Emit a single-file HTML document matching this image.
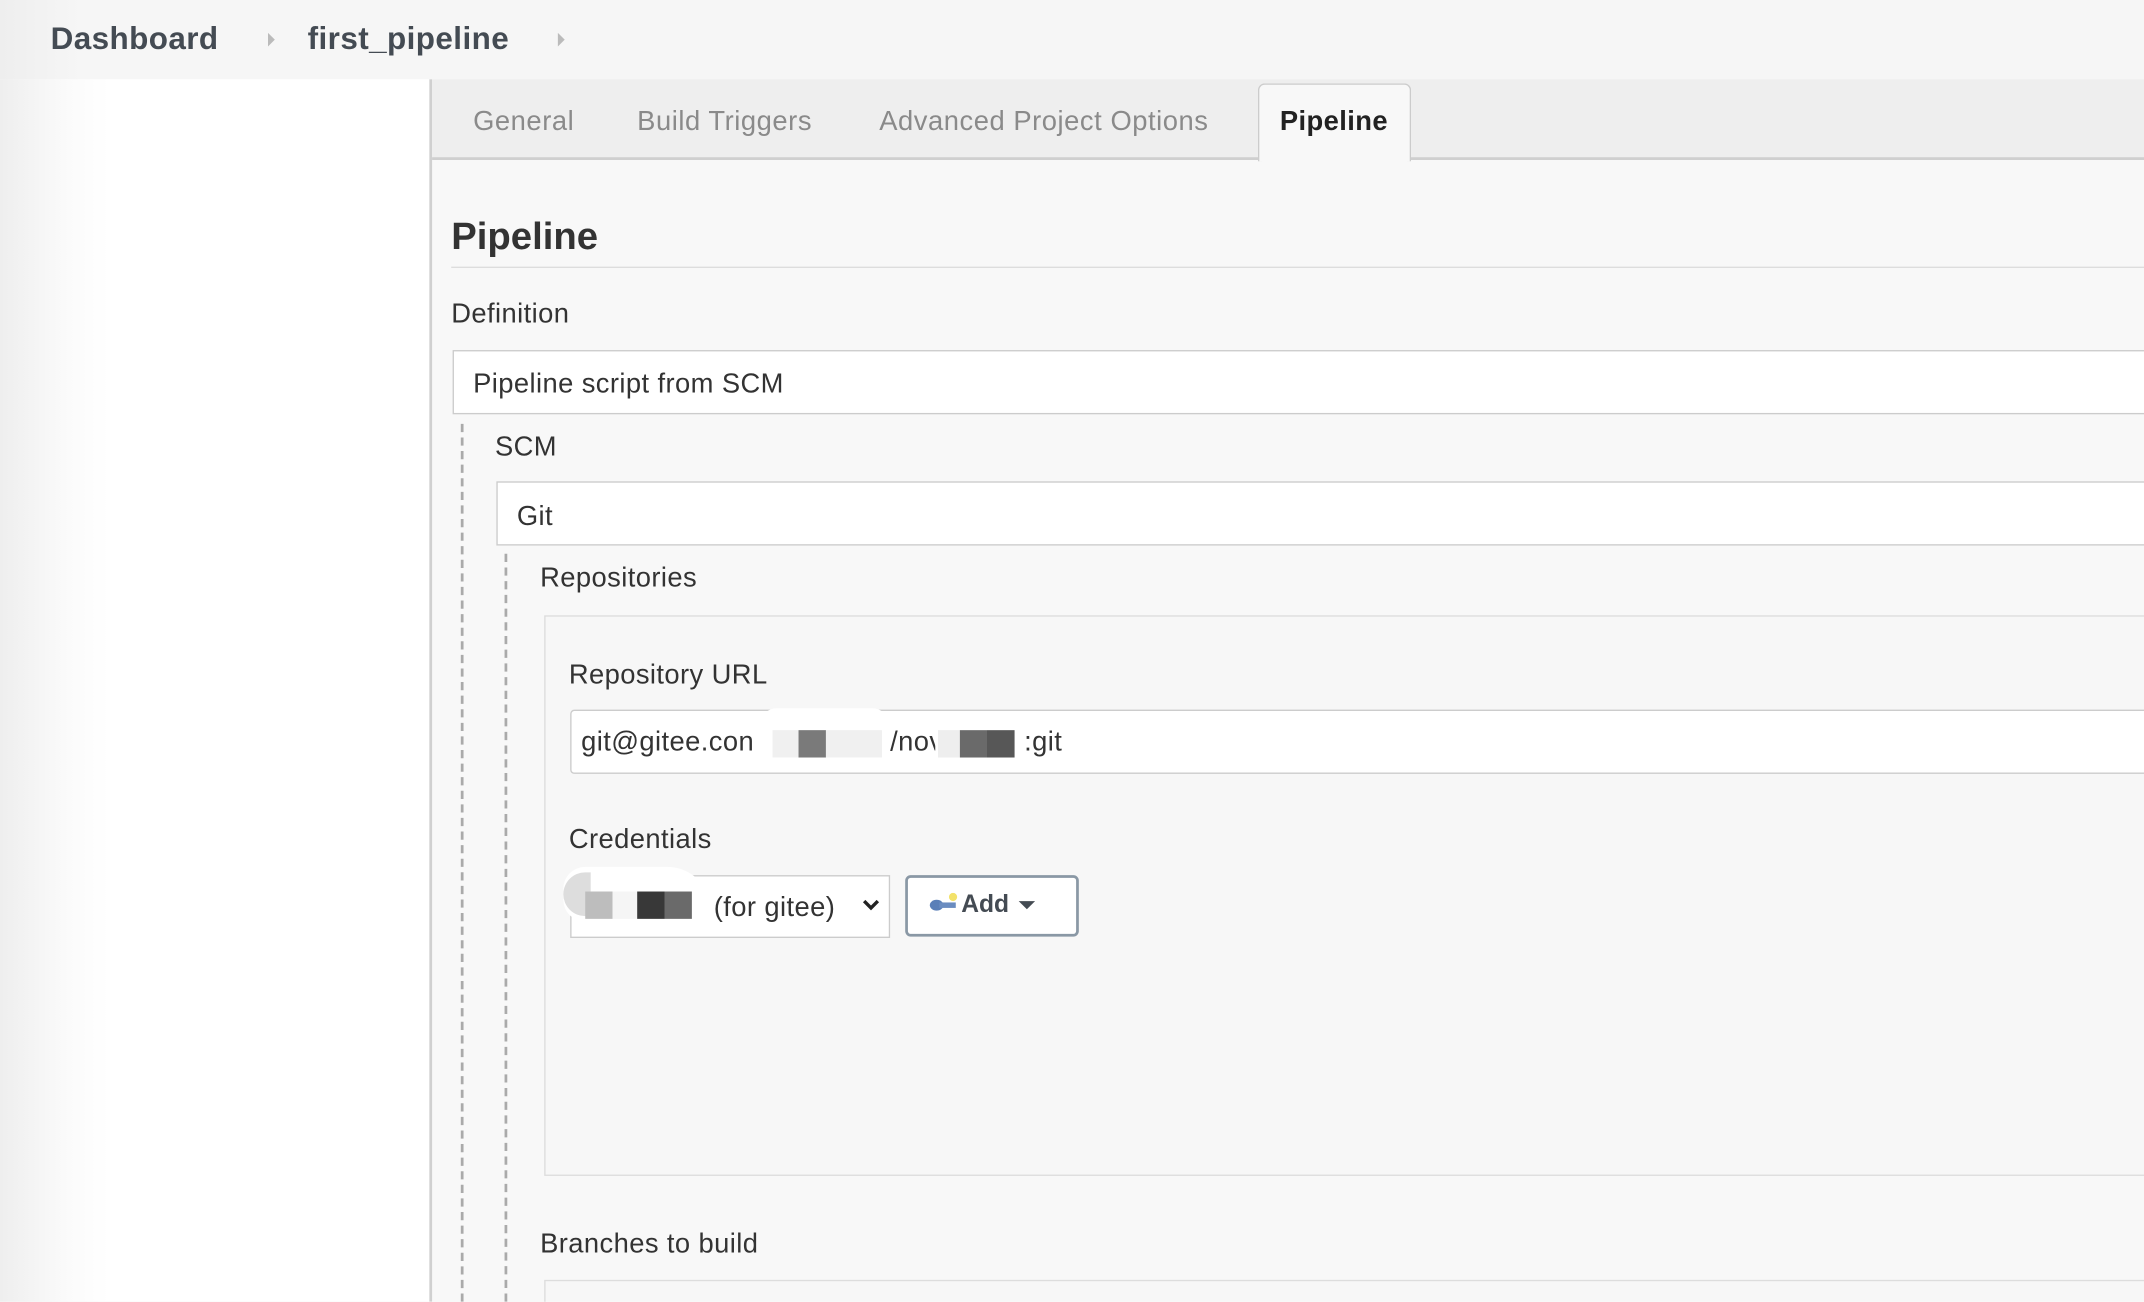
<!DOCTYPE html>
<html><head><meta charset="utf-8"><style>
html,body{margin:0;padding:0;width:2144px;height:1302px;overflow:hidden;background:#f8f8f8;font-family:"Liberation Sans",Arial,sans-serif}
#w{position:absolute;left:0;top:0;width:1568px;height:952px;overflow:hidden;transform:scale(1.36735);transform-origin:0 0;color:#333}
.a{position:absolute;white-space:nowrap}
.lbl{font-size:20px;color:#333;line-height:24px;letter-spacing:0.3px}
.box{position:absolute;background:#fff;border:1px solid #ccc;box-sizing:border-box}
</style></head><body><div id="w">
<div class="a" style="left:0;top:0;width:1568px;height:58px;background:linear-gradient(90deg,#eeeeee 0,#f6f6f6 60px,#f6f6f6 100%)"></div>
<div class="a" style="left:37px;top:15px;font-size:23px;font-weight:bold;color:#444b53;letter-spacing:0.3px">Dashboard</div>
<div class="a" style="left:196px;top:24px;width:0;height:0;border-left:5px solid #bbb;border-top:5px solid transparent;border-bottom:5px solid transparent"></div>
<div class="a" style="left:225px;top:15px;font-size:23px;font-weight:bold;color:#444b53;letter-spacing:0.3px">first_pipeline</div>
<div class="a" style="left:408px;top:24px;width:0;height:0;border-left:5px solid #bbb;border-top:5px solid transparent;border-bottom:5px solid transparent"></div>
<div class="a" style="left:0;top:58px;width:315px;height:894px;background:linear-gradient(90deg,#eeeeee 0,#fbfbfb 50px,#fff 80px)"></div>
<div class="a" style="left:314px;top:58px;width:2px;height:894px;background:#d0d0d0"></div>
<div class="a" style="left:316px;top:58px;width:1252px;height:57px;background:#eeeeee;border-bottom:2px solid #cfcfcf"></div>
<div class="a" style="left:346px;top:78px;font-size:20px;color:#8a8a8a;letter-spacing:0.4px">General</div>
<div class="a" style="left:466px;top:78px;font-size:20px;color:#8a8a8a;letter-spacing:0.4px">Build Triggers</div>
<div class="a" style="left:643px;top:78px;font-size:20px;color:#8a8a8a;letter-spacing:0.4px">Advanced Project Options</div>
<div class="a" style="left:920px;top:61px;width:112px;height:57px;background:#f8f8f8;border:1px solid #ccc;border-bottom:none;border-radius:5px 5px 0 0;box-sizing:border-box"></div>
<div class="a" style="left:936px;top:78px;font-size:20px;font-weight:bold;color:#222;letter-spacing:0.3px">Pipeline</div>
<div class="a" style="left:330px;top:157px;font-size:28px;font-weight:bold;color:#333">Pipeline</div>
<div class="a" style="left:330px;top:195px;width:1238px;height:1px;background:#ddd"></div>
<div class="a lbl" style="left:330px;top:218px">Definition</div>
<div class="box" style="left:331px;top:256px;width:1250px;height:47px"></div>
<div class="a lbl" style="left:346px;top:269px">Pipeline script from SCM</div>
<div class="a" style="left:337px;top:310px;height:642px;border-left:2px dashed #aaa"></div>
<div class="a lbl" style="left:362px;top:315px">SCM</div>
<div class="box" style="left:363px;top:352px;width:1220px;height:47px"></div>
<div class="a lbl" style="left:378px;top:366px">Git</div>
<div class="a" style="left:369px;top:405px;height:547px;border-left:2px dashed #aaa"></div>
<div class="a lbl" style="left:395px;top:411px">Repositories</div>
<div class="a" style="left:398px;top:450px;width:1180px;height:410px;border:1px solid #ddd;background:#f7f7f7;box-sizing:border-box"></div>
<div class="a lbl" style="left:416px;top:482px">Repository URL</div>
<div class="box" style="left:417px;top:519px;width:1170px;height:47px;border-radius:3px"></div>
<div class="a lbl" style="left:425px;top:531px">git@gitee.con</div>
<div class="a" style="left:556px;top:518px;width:94px;height:40px;background:#fff;border-radius:12px"></div>
<div class="a" style="left:565px;top:534px;width:80px;height:20px;background:#f0f0f0"></div>
<div class="a" style="left:584px;top:534px;width:20px;height:20px;background:#7a7a7a"></div>
<div class="a lbl" style="left:651px;top:531px">/nov</div>
<div class="a" style="left:684px;top:522px;width:64px;height:40px;background:#fff;border-radius:12px"></div>
<div class="a" style="left:686px;top:534px;width:16px;height:20px;background:#eee"></div>
<div class="a" style="left:702px;top:534px;width:40px;height:20px;background:linear-gradient(90deg,#6a6a6a 50%,#575757 50%)"></div>
<div class="a lbl" style="left:749px;top:531px">:git</div>
<div class="a lbl" style="left:416px;top:602px">Credentials</div>
<div class="box" style="left:417px;top:640px;width:234px;height:46px"></div>
<div class="a" style="left:412px;top:634px;width:108px;height:40px;background:#fff;border-radius:20px 40px 10px 20px"></div>
<div class="a" style="left:412px;top:638px;width:20px;height:32px;background:#ddd;border-radius:16px 0 0 16px"></div>
<div class="a" style="left:428px;top:652px;width:20px;height:20px;background:#bdbdbd"></div>
<div class="a" style="left:448px;top:652px;width:18px;height:20px;background:#f5f5f5"></div>
<div class="a" style="left:466px;top:652px;width:40px;height:20px;background:linear-gradient(90deg,#383838 50%,#6a6a6a 50%)"></div>
<div class="a lbl" style="left:522px;top:652px">(for gitee)</div>
<svg class="a" style="left:630px;top:657px" width="14" height="10"><path d="M2 2 L7 7 L12 2" stroke="#222" stroke-width="2.5" fill="none"/></svg>
<div class="a" style="left:662px;top:640px;width:127px;height:45px;border:2px solid #8a98a5;border-radius:4px;background:#fff;box-sizing:border-box"></div>
<svg class="a" style="left:679px;top:652px" width="24" height="16"><ellipse cx="6" cy="10" rx="5" ry="4" fill="#5a7fb8"/><rect x="8" y="8" width="12" height="4" fill="#6a8cc0"/><circle cx="18" cy="4" r="3" fill="#f3e26a"/></svg>
<div class="a" style="left:703px;top:651px;font-size:18px;font-weight:bold;color:#444b53">Add</div>
<div class="a" style="left:745px;top:659px;width:0;height:0;border-top:6px solid #444b53;border-left:6px solid transparent;border-right:6px solid transparent"></div>
<div class="a lbl" style="left:395px;top:898px">Branches to build</div>
<div class="a" style="left:398px;top:936px;width:1180px;height:30px;border:1px solid #ddd;background:#f7f7f7;box-sizing:border-box"></div>
</div></body></html>
